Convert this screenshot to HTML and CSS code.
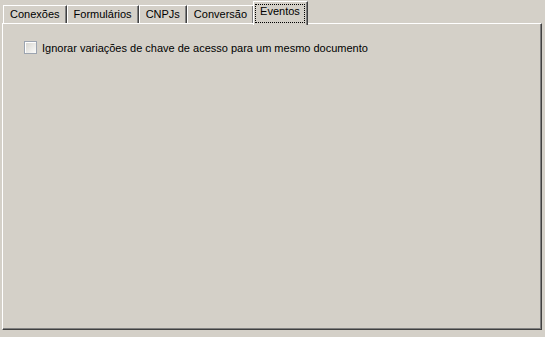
FILE: index.html
```html
<!DOCTYPE html>
<html lang="pt-BR">
<head>
    <meta charset="UTF-8">
    <title>Configurações - Eventos</title>
    <link rel="stylesheet" href="styles.css">
</head>
<body>
    <div class="window">
        <div class="tabs">
            <div class="tab">Conexões</div>
            <div class="tab">Formulários</div>
            <div class="tab">CNPJs</div>
            <div class="tab">Conversão</div>
            <div class="tab active"><span class="focus">Eventos</span></div>
        </div>

        <div class="pane">
            <label class="check">
                <span class="box"></span>
                <span class="caption">Ignorar variações de chave de acesso para um mesmo documento</span>
            </label>
        </div>
    </div>
</body>
</html>
```

FILE: styles.css
```css
/* Base */
body {
    margin: 0;
    background-color: #d4d0c8;
    font-family: "Liberation Sans", Arial, sans-serif;
    font-size: 11px;
    color: #000000;
}

.window {
    width: 545px;
    height: 337px;
}

/* Tab strip */
.tabs {
    display: flex;
    align-items: flex-end;
    height: 23px;
    padding-left: 3px;
    position: relative;
    z-index: 1;
}

.tab {
    height: 18px;
    line-height: 17px;
    padding: 0 6px;
    border-top: 1px solid #ffffff;
    border-left: 1px solid #ffffff;
    border-right: 1px solid #404040;
    box-shadow: inset -1px 0 #808080;
    box-sizing: border-box;
}

.tab.active {
    height: 24px;
    margin-left: -1px;
    padding: 2px 2px 0 1px;
    background-color: #d4d0c8;
    position: relative;
    top: 2px;
}

.focus {
    display: block;
    height: 19px;
    line-height: 15px;
    padding: 0 5px;
    outline: 1px dotted #000000;
    outline-offset: -1px;
}

/* Page body */
.pane {
    margin-left: 2px;
    width: 540px;
    height: 307px;
    box-sizing: border-box;
    border-top: 1px solid #ffffff;
    border-left: 1px solid #ffffff;
    border-right: 1px solid #404040;
    border-bottom: 1px solid #404040;
    box-shadow: inset -1px -1px #808080;
    padding: 17px 0 0 21px;
}

.check {
    display: flex;
    align-items: center;
    gap: 5px;
    height: 13px;
}

.box {
    width: 13px;
    height: 13px;
    box-sizing: border-box;
    border: 1px solid #9ca4b0;
    background: linear-gradient(135deg, #d6d4ce, #fbfbfa);
    box-shadow: inset 1px 1px #ffffff;
}
```
